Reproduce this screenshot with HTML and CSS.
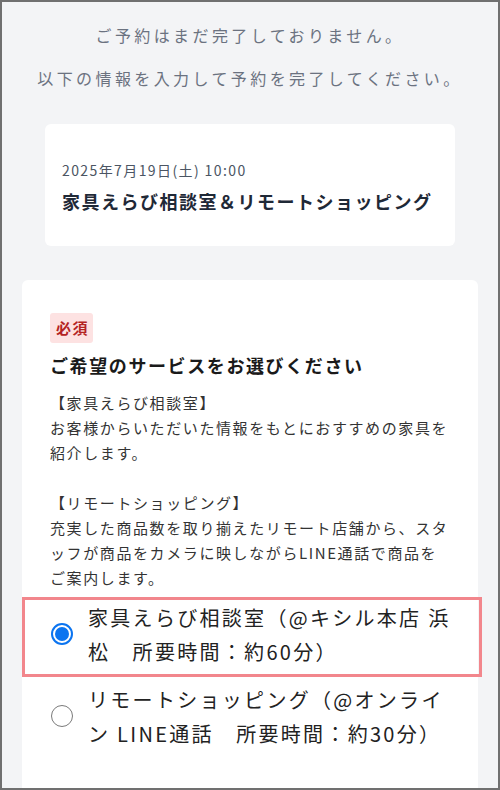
FILE: index.html
```html
<!DOCTYPE html>
<html lang="ja">
<head>
<meta charset="utf-8">
<title>ご予約</title>
<link rel="stylesheet" href="styles.css">
</head>
<body>
<div class="frame">
  <div class="intro">
    <p>ご予約はまだ完了しておりません。</p>
    <p>以下の情報を入力して予約を完了してください。</p>
  </div>
  <div class="summary">
    <div class="date">2025年7月19日(土) 10:00</div>
    <div class="title">家具えらび相談室＆リモートショッピング</div>
  </div>
  <div class="form-card">
    <span class="badge">必須</span>
    <h2 class="heading">ご希望のサービスをお選びください</h2>
    <div class="desc">
      <p>【家具えらび相談室】<br>お客様からいただいた情報をもとにおすすめの家具を<br>紹介します。</p>
      <p>【リモートショッピング】<br>充実した商品数を取り揃えたリモート店舗から、スタ<br>ッフが商品をカメラに映しながらLINE通話で商品を<br>ご案内します。</p>
    </div>
    <div class="options">
      <label class="option selected">
        <span class="radio"></span>
        <span class="opt-text">家具えらび相談室（@キシル本店 浜<br>松　所要時間：約60分）</span>
      </label>
      <label class="option">
        <span class="radio"></span>
        <span class="opt-text">リモートショッピング（@オンライ<br>ン LINE通話　所要時間：約30分）</span>
      </label>
    </div>
  </div>
</div>
</body>
</html>
```
FILE: styles.css
```css
* { box-sizing: border-box; }
html, body { margin: 0; padding: 0; }
body {
  font-family: "Noto Sans CJK JP", "Noto Sans", sans-serif;
  background: #ffffff;
}
.frame {
  width: 500px;
  height: 790px;
  border: 2px solid #707070;
  background: #f3f4f6;
  overflow: hidden;
  display: flex;
  flex-direction: column;
}
.intro {
  padding-top: 20px;
  display: flex;
  flex-direction: column;
  gap: 17px;
  text-align: center;
  color: #6b7280;
  font-size: 16px;
  letter-spacing: 3.4px;
  line-height: 26px;
}
.intro p { margin: 0; }
.summary {
  margin: 33px 43px 0;
  background: #ffffff;
  border-radius: 6px;
  padding: 36px 17px 32px;
}
.date {
  font-size: 14px;
  letter-spacing: 1.4px;
  line-height: 21px;
  color: #4b5563;
}
.title {
  margin-top: 7px;
  font-size: 18px;
  font-weight: 700;
  letter-spacing: 1.5px;
  line-height: 26px;
  color: #1f2937;
}
.form-card {
  margin: 34px 20px 0;
  background: #ffffff;
  border-radius: 6px 6px 0 0;
  padding: 33px 24px 0 28px;
  flex: 1;
  display: flex;
  flex-direction: column;
}
.badge {
  align-self: flex-start;
  height: 30px;
  line-height: 30px;
  padding: 0 4px 0 6px;
  background: #fde2e2;
  color: #b42323;
  font-size: 15px;
  font-weight: 700;
  letter-spacing: 1.5px;
  border-radius: 3px;
}
.heading {
  margin: 9px 0 0;
  font-size: 18px;
  font-weight: 700;
  line-height: 26px;
  letter-spacing: 1.6px;
  color: #1a1a1a;
}
.desc {
  margin-top: 12px;
  font-size: 15px;
  line-height: 25px;
  letter-spacing: 1.6px;
  color: #333333;
}
.desc p { margin: 0 0 25px; }
.desc p:last-child { margin-bottom: 0; }
.options {
  margin: 7px -28px 0;
  display: flex;
  flex-direction: column;
  gap: 2px;
}
.option {
  display: flex;
  align-items: flex-start;
  padding: 1px 27px 5px 26px;
  border: 3px solid transparent;
}
.option.selected { border-color: #f2868c; }
.radio {
  flex: none;
  width: 22px;
  height: 22px;
  margin-top: 22px;
  margin-right: 15px;
  border-radius: 50%;
  border: 1.5px solid #7a7a7a;
}
.selected .radio {
  border: 2px solid #0b74f0;
  padding: 2px;
  background: #0b74f0;
  background-clip: content-box;
}
.opt-text {
  flex: 1;
  font-size: 20px;
  letter-spacing: 2.3px;
  line-height: 34px;
  color: #222222;
}
```
